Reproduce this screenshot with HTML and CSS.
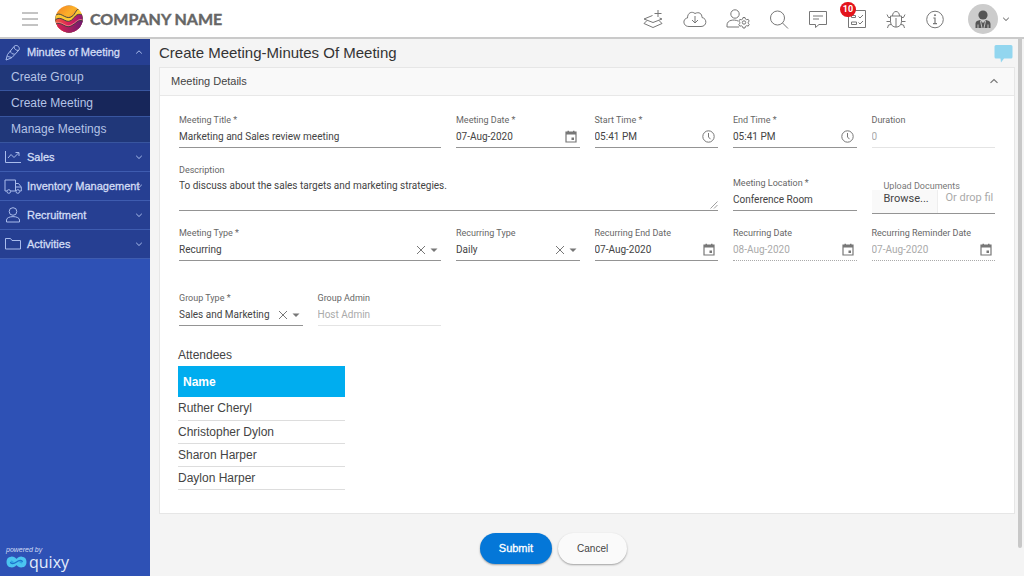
FILE: index.html
```html
<!DOCTYPE html>
<html lang="en">
<head>
<meta charset="utf-8">
<meta name="viewport" content="width=device-width, initial-scale=1">
<title>Create Meeting</title>
<link rel="stylesheet" href="styles.css">
</head>
<body>
<svg class="sprite" aria-hidden="true">
  <symbol id="calendar" viewBox="0 0 12 13"><path d="M1 2h10v10H1z" fill="none" stroke="currentColor" stroke-width="1.2"/><path d="M1 2h10v2.500H1zM2.500.8H4V3H2.500zM8 .8h1.500V3H8zM6.500 7.500h2.500v2.500h-2.500z" fill="currentColor" stroke="none"/></symbol>
  <symbol id="clock" viewBox="0 0 13 13"><circle cx="6.500" cy="6.500" r="5.700"/><path d="M6.500 3v4l2 2.200"/></symbol>
  <symbol id="close" viewBox="0 0 10 10"><path d="M1 1l8 8M9 1L1 9"/></symbol>
  <symbol id="caret" viewBox="0 0 8 8"><path d="M.5 2.500h7L4 6z" fill="currentColor" stroke="none"/></symbol>
  <symbol id="down" viewBox="0 0 8 8"><path d="M1.200 2.800L4 5.500l2.800-2.700"/></symbol>
  <symbol id="up" viewBox="0 0 8 8"><path d="M1.200 5.500L4 2.800l2.800 2.700"/></symbol>
</svg>

<header class="topbar">
  <button class="icon-btn menu" aria-label="Menu"><svg width="18" height="14" viewBox="0 0 18 14"><path d="M1 1h16M1 7h16M1 13h16"/></svg></button>
  <svg class="logo" width="28" height="28" viewBox="0 0 28 28" aria-hidden="true">
    <defs>
      <linearGradient id="sun" x1="0" y1="0" x2="1" y2="1"><stop offset="0" stop-color="#f47c20"/><stop offset=".4" stop-color="#fbb12a"/><stop offset="1" stop-color="#e8453c"/></linearGradient>
      <linearGradient id="rose" x1="0" y1="0" x2="1" y2="0"><stop offset="0" stop-color="#f0603a"/><stop offset=".5" stop-color="#dc1f5a"/><stop offset="1" stop-color="#8e1a72"/></linearGradient>
      <linearGradient id="dusk" x1="0" y1="0" x2="1" y2="0"><stop offset="0" stop-color="#e0234e"/><stop offset="1" stop-color="#6d1a70"/></linearGradient>
      <clipPath id="disc"><circle cx="14" cy="14" r="13.600"/></clipPath>
    </defs>
    <g clip-path="url(#disc)">
      <path d="M0 0h28v28H0z" fill="url(#sun)"/>
      <path d="M0 11C5 5 10 15 16 12S20 1 28 5v8c-6-2-6 7-12 7S6 11 0 16z" fill="#fcc934"/>
      <path d="M0 15c6-5 10 3 15 1s5-9 13-6v18H0z" fill="url(#rose)"/>
      <path d="M0 19c7-3 10 5 16 2s7-7 12-5v12H0z" fill="url(#dusk)"/>
      <path d="M0 18c7-3 10 5 16 2s7-7 12-5" fill="none" stroke="#f48a8a" stroke-width=".8"/>
    </g>
  </svg>
  <span class="company">COMPANY NAME</span>
  <nav class="tools" aria-label="Tools">
    <button class="icon-btn" aria-label="Add layer"><svg width="22" height="22" viewBox="0 0 22 22"><path d="M10.500 7.500L2 11l9 3.500 9-3.500-2.500-1M5 12.500L2 15.500l9 4 9-4-3-3M16 2v7M12.500 5.500h7"/></svg></button>
    <button class="icon-btn" aria-label="Download"><svg width="24" height="20" viewBox="0 0 24 20"><path d="M6 17.500C-.5 17.500-.5 9.500 4.500 9 4.500 3.500 9 2 12 4.500c4-2 7 0 7 4 5.500 1 5 9-1 9zM12 7v7M9 11l3 3 3-3"/></svg></button>
    <button class="icon-btn" aria-label="User settings"><svg width="24" height="22" viewBox="0 0 24 22"><circle cx="9" cy="6" r="4.200"/><path d="M13 19H1v-2c0-5 7-6 11-4"/><circle cx="18" cy="14.500" r="1.700"/><path d="M17 9.500h2l.4 1.500 1.300.7 1.500-.4 1 1.700-1 1.200v1l1 1.200-1 1.700-1.500-.4-1.300.7L19 20h-2l-.4-1.500-1.300-.7-1.500.4-1-1.700 1-1.200v-1l-1-1.200 1-1.700 1.500.4 1.300-.7z"/></svg></button>
    <button class="icon-btn" aria-label="Search"><svg width="20" height="20" viewBox="0 0 20 20"><circle cx="8.500" cy="9" r="7"/><path d="M13.500 14l5.500 5.500"/></svg></button>
    <button class="icon-btn" aria-label="Comments"><svg width="20" height="20" viewBox="0 0 20 20"><path d="M1.500 2.500h17v13H11L7.500 18.500v-3h-6zM5 7h10M5 10h6"/></svg></button>
    <button class="icon-btn tasks" aria-label="Tasks, 10 new"><svg width="20" height="20" viewBox="0 0 20 20"><path d="M1.500 1.500h17v17h-17zM4.500 6.500h4v2h-4zM4.500 13h5v2.500h-5zM11.500 7.500L13 9l3-3M11.500 13.500L13 15l3-3"/></svg><span class="badge">10</span></button>
    <button class="icon-btn" aria-label="Report a bug"><svg width="20" height="20" viewBox="0 0 20 20"><path d="M4.500 7h11v5.500c0 7.500-11 7.500-11 0zM6.500 7C6.500 1 13.500 1 13.500 7M10 9v9M1 5.500l1.500 3h2M19 5.500l-1.500 3h-2M.5 12.500h4M15.500 12.500h4M1.500 19l1-3 2.500-.5M18.500 19l-1-3-2.500-.5"/></svg></button>
    <button class="icon-btn" aria-label="Information"><svg width="20" height="20" viewBox="0 0 20 20"><circle cx="10" cy="10.500" r="8.300"/><path d="M8.300 9H10v5.500M8 14.700h4" stroke-width="1.200"/><circle cx="10" cy="6.200" r=".6" fill="#777"/></svg></button>
  </nav>
  <button class="icon-btn account" aria-label="Account">
    <svg width="30" height="30" viewBox="0 0 30 30"><circle cx="15" cy="15" r="15" fill="#ccc" stroke="none"/><circle cx="15" cy="11" r="4.600" fill="#555" stroke="none"/><path d="M7.500 24v-4c0-3 2.500-3.500 4.500-4l3 3 3-3c2 .5 4.500 1 4.500 4v4z" fill="#555" stroke="none"/><path d="M12.500 17l1.500 7M17.500 17L16 24M10 20.500V24M20 20.500V24" stroke="#ccc" stroke-width=".9"/></svg>
    <svg width="8" height="8"><use href="#down"/></svg>
  </button>
</header>

<div class="shell">
  <aside class="sidebar">
    <nav aria-label="Main">
      <button class="nav-item open"><svg width="18" height="18" viewBox="0 0 18 18"><path d="M2 17l1.500-5.500L10 3.500c2-2.500 6.500 0 5 3.500l-7 7.500-4.500-1M2 17l4-1.500 2-1M6.500 8c0 2 2 3.500 4 3M10 3.500c0 2.500 2 4 4.500 4"/></svg><span>Minutes of Meeting</span><svg class="chev" width="8" height="8"><use href="#up"/></svg></button>
      <a class="sub" href="#group">Create Group</a>
      <a class="sub current" href="#meeting" aria-current="page">Create Meeting</a>
      <a class="sub" href="#manage">Manage Meetings</a>
      <button class="nav-item"><svg width="18" height="18" viewBox="0 0 18 18"><path d="M1.500 3v11.500H17M4 10l3-3.500 3 3L14.500 5M11.500 4.500H15V8"/></svg><span>Sales</span><svg class="chev" width="8" height="8"><use href="#down"/></svg></button>
      <button class="nav-item"><svg width="18" height="18" viewBox="0 0 18 18"><path d="M3 14H1V3h10.500v11h-5M11.500 6.500h3L17.300 10v4H16M11.500 10h5.500"/><circle cx="4.800" cy="14.500" r="1.800"/><circle cx="13.800" cy="14.500" r="1.800"/></svg><span>Inventory Management</span><svg class="chev" width="8" height="8"><use href="#down"/></svg></button>
      <button class="nav-item"><svg width="18" height="18" viewBox="0 0 18 18"><circle cx="9" cy="5.500" r="3.800"/><path d="M2.500 16v-2c0-4.500 13-4.500 13 0v2z"/></svg><span>Recruitment</span><svg class="chev" width="8" height="8"><use href="#down"/></svg></button>
      <button class="nav-item"><svg width="18" height="18" viewBox="0 0 18 18"><path d="M1.500 3.500h5L8 5.500h8.500V14h-15z"/></svg><span>Activities</span><svg class="chev" width="8" height="8"><use href="#down"/></svg></button>
    </nav>
    <footer class="powered">
      <small>powered by</small>
      <div class="brand"><svg width="21" height="14" viewBox="0 0 21 14" aria-hidden="true"><path d="M10.500 7C7 2 2.500 3 2.500 7s4.500 5 8 0 8-4 8 0-4.500 5-8 0z" fill="#2fa5e4" stroke="#4cc4f0" stroke-width="4"/><path d="M4.500 7c0 2.500 3.500 2 6 0s5.500-2.500 6 0" fill="none" stroke="#1f74cc" stroke-width="1.200"/></svg><span>quixy</span></div>
    </footer>
  </aside>

  <main class="main">
    <div class="title-row">
      <h1>Create Meeting-Minutes Of Meeting</h1>
      <button class="icon-btn" aria-label="Chat"><svg width="19" height="19" viewBox="0 0 19 19"><path d="M2 1h15q1.500 0 1.500 1.500V13q0 1.500-1.500 1.500H10L7 18.500l-.5-4H2Q.5 14.500.5 13V2.500Q.5 1 2 1z" fill="#92d6ef" stroke="none"/></svg></button>
    </div>
    <form class="form">
      <section class="card">
        <header class="card-head"><h2>Meeting Details</h2><button type="button" class="icon-btn" aria-label="Collapse"><svg width="10" height="10" viewBox="0 0 8 8"><use href="#up"/></svg></button></header>
        <div class="fields">
          <div class="field span2"><label for="title">Meeting Title *</label><div class="control"><input id="title" value="Marketing and Sales review meeting"></div></div>
          <div class="field"><label for="date">Meeting Date *</label><div class="control"><input id="date" value="07-Aug-2020"><svg class="cal" width="12" height="13"><use href="#calendar"/></svg></div></div>
          <div class="field"><label for="start">Start Time *</label><div class="control"><input id="start" value="05:41 PM"><svg width="13" height="13"><use href="#clock"/></svg></div></div>
          <div class="field"><label for="end">End Time *</label><div class="control"><input id="end" value="05:41 PM"><svg width="13" height="13"><use href="#clock"/></svg></div></div>
          <div class="field off"><label for="duration">Duration</label><div class="control"><input id="duration" value="0" disabled></div></div>

          <div class="field span4"><label for="desc">Description</label><div class="control area"><textarea id="desc">To discuss about the sales targets and marketing strategies.</textarea><svg class="grip" width="8" height="8" viewBox="0 0 8 8"><path d="M.5 7.500l7-7M4 7.500L7.500 4" stroke-width=".7"/></svg></div></div>
          <div class="field"><label for="place">Meeting Location *</label><div class="control"><input id="place" value="Conference Room"></div></div>
          <div class="field upload"><span class="upload-label" id="docs">Upload Documents</span><div class="control"><button type="button" aria-describedby="docs">Browse...</button><span class="drop">Or drop fil</span></div></div>

          <div class="field span2"><label for="type">Meeting Type *</label><div class="control"><select id="type"><option>Recurring</option></select><button type="button" class="icon-btn" aria-label="Clear meeting type"><svg width="10" height="10"><use href="#close"/></svg></button><svg class="arrow" width="8" height="8"><use href="#caret"/></svg></div></div>
          <div class="field"><label for="rtype">Recurring Type</label><div class="control"><select id="rtype"><option>Daily</option></select><button type="button" class="icon-btn" aria-label="Clear recurring type"><svg width="10" height="10"><use href="#close"/></svg></button><svg class="arrow" width="8" height="8"><use href="#caret"/></svg></div></div>
          <div class="field"><label for="rend">Recurring End Date</label><div class="control"><input id="rend" value="07-Aug-2020"><svg class="cal" width="12" height="13"><use href="#calendar"/></svg></div></div>
          <div class="field off dotted"><label for="rdate">Recurring Date</label><div class="control"><input id="rdate" value="08-Aug-2020" disabled><svg class="cal" width="12" height="13"><use href="#calendar"/></svg></div></div>
          <div class="field off dotted"><label for="rrem">Recurring Reminder Date</label><div class="control"><input id="rrem" value="07-Aug-2020" disabled><svg class="cal" width="12" height="13"><use href="#calendar"/></svg></div></div>
        </div>
        <div class="fields group">
          <div class="field"><label for="gtype">Group Type *</label><div class="control"><select id="gtype"><option>Sales and Marketing</option></select><button type="button" class="icon-btn" aria-label="Clear group type"><svg width="10" height="10"><use href="#close"/></svg></button><svg class="arrow" width="8" height="8"><use href="#caret"/></svg></div></div>
          <div class="field off"><label for="admin">Group Admin</label><div class="control"><input id="admin" value="Host Admin" disabled></div></div>
        </div>
        <table class="attendees">
          <caption>Attendees</caption>
          <thead><tr><th scope="col">Name</th></tr></thead>
          <tbody>
            <tr><td>Ruther Cheryl</td></tr>
            <tr><td>Christopher Dylon</td></tr>
            <tr><td>Sharon Harper</td></tr>
            <tr><td>Daylon Harper</td></tr>
          </tbody>
        </table>
      </section>
      <div class="actions"><button type="submit" class="btn primary">Submit</button><button type="button" class="btn">Cancel</button></div>
    </form>
  </main>
  <div class="scroll" aria-hidden="true"><div class="thumb"></div></div>
</div>
</body>
</html>
```
FILE: styles.css
```css
* { box-sizing: border-box; }
body {
  margin: 0;
  min-height: 100vh;
  display: flex;
  flex-direction: column;
  font-family: "Liberation Sans", Arial, sans-serif;
  font-size: 10px;
  color: #444;
  background: #f4f4f4;
}
h1, h2 { margin: 0; font-weight: 400; }
button, input, select, textarea { font: inherit; color: inherit; margin: 0; }
svg { flex: none; fill: none; stroke: currentColor; stroke-width: 1; }
.sprite { position: absolute; width: 0; height: 0; }
.icon-btn {
  display: flex;
  align-items: center;
  padding: 0;
  border: 0;
  background: none;
  color: #777;
}

.topbar {
  display: flex;
  align-items: center;
  height: 39px;
  padding: 0 14px 0 21px;
  background: #fff;
  border-bottom: 2px solid #cacaca;
}
.menu { color: #888; }
.logo { margin-left: 16px; }
.company {
  margin-left: 7px;
  font: 700 16px/20px Lato, sans-serif;
  color: #666;
  -webkit-text-stroke: 0.4px currentColor;
}
.tools { display: flex; align-items: center; gap: 19px; margin-left: auto; }
.tasks { position: relative; }
.badge {
  position: absolute;
  left: -7px;
  top: -7px;
  width: 16px;
  border-radius: 8px;
  background: #e3131b;
  color: #fff;
  font: 700 9px/15px Roboto, sans-serif;
  text-align: center;
}
.account { gap: 4px; margin-left: 23px; color: #555; }

.shell { flex: 1; display: flex; }
.sidebar {
  width: 150px;
  display: flex;
  flex-direction: column;
  justify-content: space-between;
  background: #2e51b5;
  color: #d3ddf5;
}
.nav-item {
  display: flex;
  align-items: center;
  gap: 5px;
  width: 100%;
  height: 29px;
  padding: 0 7px 0 4px;
  border: 0;
  border-bottom: 1px solid #3e5cb0;
  background: #263f92;
  font-size: 11px;
  text-align: left;
  white-space: nowrap;
  -webkit-text-stroke: 0.3px currentColor;
}
.nav-item.open { height: 26px; border: 0; }
.nav-item span { flex: 1; width: 0; }
.nav-item svg { color: #a9bcec; }
.sub {
  display: block;
  padding-left: 11px;
  border-bottom: 1px solid #38559f;
  background: #203779;
  color: #b4c3e6;
  font-size: 12px;
  line-height: 25px;
  text-decoration: none;
}
.sub.current { background: #17265a; }
.powered { padding: 0 6px 6px; }
.powered small { display: block; font-size: 7px; line-height: 8px; font-style: italic; }
.brand { display: flex; align-items: center; gap: 2px; font: 500 16px/16px "Open Sans", sans-serif; color: #e4edfb; }

.main { flex: 1; min-width: 0; padding-left: 9px; }
.title-row { display: flex; align-items: center; justify-content: space-between; height: 28px; padding-right: 2px; }
h1 { font-size: 15px; line-height: 28px; color: #333; }
.card { background: #fff; border: 1px solid #e6e6e6; padding-bottom: 23px; }
.card-head {
  display: flex;
  align-items: center;
  justify-content: space-between;
  height: 28px;
  padding: 0 15px 1px 11px;
  background: #f9f9f9;
  border-bottom: 1px solid #e8e8e8;
}
h2 { font-size: 11px; }
.fields {
  display: grid;
  grid-template-columns: repeat(6, minmax(0, 1fr));
  gap: 15px;
  padding: 17px 19px 0;
  font-family: Roboto, sans-serif;
}
.fields.group { padding-top: 30px; }
.span2 { grid-column: span 2; }
.span4 { grid-column: span 4; }
.field { align-self: end; }
.field label { display: block; line-height: 14px; font-size: 9px; color: #666; white-space: nowrap; }
.control {
  display: flex;
  align-items: center;
  height: 21px;
  padding: 0 3px 1px 0;
  border-bottom: 1px solid #949494;
  color: #777;
}
.control input, .control select, .control textarea {
  flex: 1;
  min-width: 0;
  padding: 0;
  border: 0;
  outline: 0;
  background: none;
  color: #444;
  appearance: none;
}
.control .icon-btn + .arrow { margin-left: 4px; }
.control.area { height: 34px; align-items: stretch; padding-right: 0; }
.area textarea { padding-top: 3px; resize: none; overflow: hidden; }
.area .grip { align-self: flex-end; }
.off .control { border-bottom-color: #e4e4e4; }
.off .control input { color: #aaa; }
.off.dotted .control { border-bottom: 1px dotted #aaa; }
.upload { margin-bottom: -3px; }
.upload-label { display: block; padding-left: 12px; font-size: 9px; line-height: 8px; color: #777; }
.upload .control { height: 24px; padding: 0; align-items: stretch; font-size: 11px; }
.upload button { width: 66px; padding: 0 8px 7px 12px; border: 0; border-right: 1px solid #eee; background: #f9f9f9; color: #444; text-align: left; }
.drop { padding-left: 8px; line-height: 16px; color: #aaa; white-space: nowrap; overflow: hidden; }

.attendees { width: 167px; margin: 20px 0 0 18px; border-collapse: collapse; font-size: 12px; }
.attendees caption { text-align: left; line-height: 18px; padding-bottom: 2px; }
.attendees th { height: 31px; padding: 0 5px; background: #00adef; color: #fff; text-align: left; }
.attendees td { height: 23px; padding: 0; border-bottom: 1px solid #ddd; }

.actions { display: flex; justify-content: center; gap: 6px; padding: 19px 67px 11px 0; }
.btn {
  height: 31px;
  padding: 0 19px;
  border: 0;
  border-radius: 16px;
  background: #fafafa;
  box-shadow: 0 1px 2px rgba(0, 0, 0, 0.35);
}
.btn.primary { background: #0477d8; color: #fff; font-size: 11px; -webkit-text-stroke: 0.3px currentColor; }
.scroll { width: 9px; padding: 0 2px 28px 3px; }
.thumb { height: 100%; background: #c8c8c8; border-radius: 0 0 2px 2px; }
```
